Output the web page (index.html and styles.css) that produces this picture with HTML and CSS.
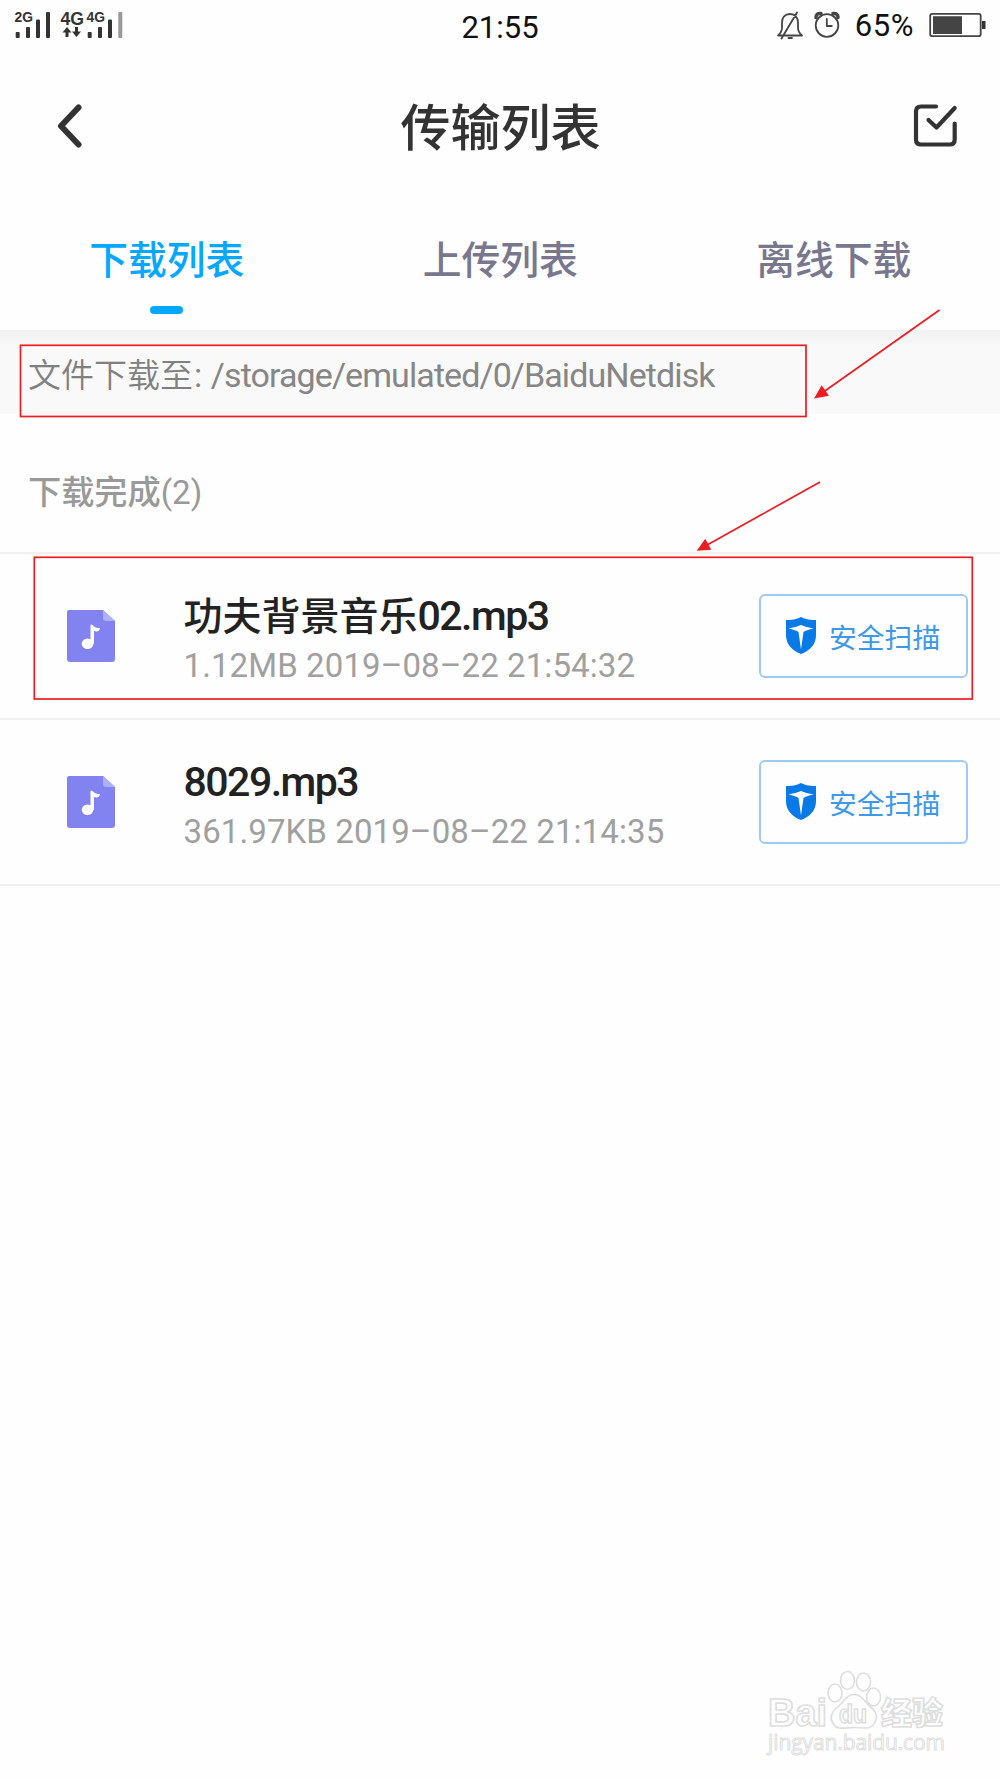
FILE: index.html
```html
<!DOCTYPE html>
<html lang="zh-CN">
<head>
<meta charset="utf-8">
<title>传输列表</title>
<link rel="stylesheet" href="styles.css">
</head>
<body>
<div class="screen">
  <div class="status">
    <svg class="signals" width="130" height="44" viewBox="0 0 130 44">
      <g class="net">
        <text x="14.5" y="22" font-size="14" textLength="18.500" lengthAdjust="spacingAndGlyphs">2G</text>
        <text x="60.5" y="24.5" font-size="18" textLength="23.500" lengthAdjust="spacingAndGlyphs">4G</text>
        <text x="86.5" y="22" font-size="14" textLength="18.500" lengthAdjust="spacingAndGlyphs">4G</text>
      </g>
      <g fill="#333">
        <rect x="15.700" y="32" width="4" height="6" rx="1"/><rect x="26" y="27" width="4" height="11" rx="1"/><rect x="36" y="19.500" width="4" height="18.500" rx="1"/><rect x="46" y="12" width="4" height="26" rx="1"/>
        <rect x="87.700" y="32" width="4" height="6" rx="1"/><rect x="98" y="27" width="4" height="11" rx="1"/><rect x="108" y="19.500" width="4" height="18.500" rx="1"/><rect x="118.300" y="12" width="4" height="26" rx="1" fill="#999"/>
        <path d="M67 27l4.500 5.500H68.500V37h-3v-4.500H62.500zM76.500 37l-4.500-5.500h3V27h3v4.500h3z"/>
      </g>
    </svg>
    <span class="clock">21:55</span>
    <div class="status-right">
      <svg width="64" height="32" viewBox="776 9 64 32" fill="none" stroke="#444" stroke-width="1.800" stroke-linecap="round" stroke-linejoin="round">
        <path d="M778 35.500h24c-3-2.500-4-4-4-8v-5c0-5-3-8.500-8-8.500s-8 3.500-8 8.500v5c0 4-1 5.500-4 8zM797 12.500l-15.500 26M788.500 38h3.500"/>
        <circle cx="827" cy="25.500" r="11.300"/><path d="M826.800 19v7h5"/>
        <path d="M816 17.500c0-3 2-4.500 5-4M833 13.500c3-.5 5 1 5 4" stroke-width="3.500"/>
      </svg>
      <span class="percent">65%</span>
      <svg width="57" height="26" viewBox="929 12 57 26"><rect x="930.200" y="13.800" width="50.500" height="22.400" rx="2" fill="none" stroke="#444" stroke-width="1.800"/><path d="M933 16.200h29V34h-29z" fill="#444"/><path d="M982 21h3.500v8H982z" fill="#333"/></svg>
    </div>
  </div>
  <div class="header">
    <svg width="30" height="50" viewBox="0 0 30 50"><path d="M22.500 6.500L5 25l17.500 18.500" fill="none" stroke="#333" stroke-width="6" stroke-linecap="round" stroke-linejoin="round"/></svg>
    <h1>传输列表</h1>
    <svg width="46" height="46" viewBox="913 102 46 46" fill="none" stroke="#333" stroke-width="4.200" stroke-linecap="round" stroke-linejoin="round"><path d="M936 105.500h-15q-5 0-5 5v28q0 5 5 5h28.700q5 0 5-5v-16M928.500 119l8 7.500 18.200-19.500"/></svg>
  </div>
  <div class="tabs">
    <div class="tab active">下载列表</div>
    <div class="tab">上传列表</div>
    <div class="tab">离线下载</div>
  </div>
  <div class="path">文件下载至<span class="path-latin">: /storage/emulated/0/BaiduNetdisk</span></div>
  <div class="section">下载完成<span class="count">(2)</span></div>
  <div class="row">
    <svg class="file" width="48" height="52" viewBox="0 0 48 52"><path d="M2 0h34l12 11v38q0 3-3 3H3q-3 0-3-3V2q0-2 2-2z" fill="#8283f0"/><path d="M36 0l12 11h-9q-3 0-3-3z" fill="#adafff"/><ellipse cx="20.500" cy="33.800" rx="5.800" ry="5.200" fill="#fff"/><path d="M23.500 34V15.500q0-1.500 2-.5c2 2.500 4.500 3 7.500 3-.5 3.500-3 4-6 3V34z" fill="#fff"/></svg>
    <div class="info"><div class="name">功夫背景音乐<span class="name-latin">02.mp3</span></div><div class="meta">1.12MB 2019–08–22 21:54:32</div></div>
    <div class="scan"><svg width="30" height="37" viewBox="0 0 30 37"><path d="M0 3Q9 3.500 15 0q6 3.500 15 3V18q0 13-15 19Q0 31 0 18z" fill="#087ae8"/><path d="M2.500 11.500Q10 10 15 8q5 2 12.500 3.500Q20 13 17.500 15L15 32.500 12.500 15Q10 13 2.500 11.500z" fill="#fff"/></svg><span>安全扫描</span></div>
  </div>
  <div class="row">
    <svg class="file" width="48" height="52" viewBox="0 0 48 52"><path d="M2 0h34l12 11v38q0 3-3 3H3q-3 0-3-3V2q0-2 2-2z" fill="#8283f0"/><path d="M36 0l12 11h-9q-3 0-3-3z" fill="#adafff"/><ellipse cx="20.500" cy="33.800" rx="5.800" ry="5.200" fill="#fff"/><path d="M23.500 34V15.500q0-1.500 2-.5c2 2.500 4.500 3 7.500 3-.5 3.500-3 4-6 3V34z" fill="#fff"/></svg>
    <div class="info"><div class="name"><span class="name-latin">8029.mp3</span></div><div class="meta">361.97KB 2019–08–22 21:14:35</div></div>
    <div class="scan"><svg width="30" height="37" viewBox="0 0 30 37"><path d="M0 3Q9 3.500 15 0q6 3.500 15 3V18q0 13-15 19Q0 31 0 18z" fill="#087ae8"/><path d="M2.500 11.500Q10 10 15 8q5 2 12.500 3.500Q20 13 17.500 15L15 32.500 12.500 15Q10 13 2.500 11.500z" fill="#fff"/></svg><span>安全扫描</span></div>
  </div>
  <div class="footer">
    <svg width="190" height="96" viewBox="760 1666 190 96" class="mark">
      <text x="768" y="1726" font-size="38" font-weight="700" textLength="59" lengthAdjust="spacingAndGlyphs">Bai</text>
      <ellipse cx="835" cy="1693" rx="7" ry="9"/><ellipse cx="847.500" cy="1680.500" rx="7" ry="9"/><ellipse cx="863.500" cy="1682" rx="7" ry="9"/><ellipse cx="873.500" cy="1697" rx="7" ry="9"/>
      <path d="M854 1694.500c8 0 10 7 16 12 6 4 8 10 5 16-4 8-12 5-21 5s-17 3-21-4c-4-6-1-12 5-17 6-4 8-12 16-12z"/>
      <text x="839" y="1722.500" font-size="25" font-weight="700" textLength="28" lengthAdjust="spacingAndGlyphs">du</text>
      <text class="han" x="881" y="1724" font-size="31" font-weight="900" textLength="62">经验</text>
      <text class="site" x="768" y="1750" font-size="21" textLength="177">jingyan.baidu.com</text>
    </svg>
  </div>
  <svg class="notes" width="1000" height="720" viewBox="0 0 1000 720">
    <g fill="none" stroke="#ed1c24" stroke-width="1.700"><rect x="20.500" y="345.300" width="785.500" height="71.200"/><rect x="34.300" y="557.300" width="938" height="141.700"/><path d="M939.500 310L822 393M820 482l-112 62.500"/></g>
    <path d="M814 398.500l7.700-13.200 7.300 10.400zM696.700 550.800l8.600-12 6 11z" fill="#ed1c24"/>
  </svg>
</div>
</body>
</html>
```
FILE: styles.css
```css
* { box-sizing: border-box; }
body { margin: 0; background: #fefefe; font-family: "Noto Sans CJK SC", sans-serif; }
.screen { position: relative; display: flex; flex-direction: column; width: 1000px; height: 1778px; overflow: hidden; }
svg { flex: none; display: block; }
.status { display: grid; grid-template-columns: 1fr auto 1fr; align-items: center; height: 52px; padding: 0 14px; font: 31px/52px Roboto, sans-serif; color: #111; }
.signals { align-self: start; margin-left: -14px; }
.net { font-family: "Liberation Sans", sans-serif; font-weight: 700; fill: #333; }
.clock { padding-top: 2px; }
.status-right { display: flex; align-items: center; justify-content: flex-end; gap: 15px; height: 50px; align-self: start; }
.percent { padding-top: 2px; letter-spacing: .6px; }
.header { display: flex; align-items: center; justify-content: space-between; height: 148px; padding: 0 41px 0 56px; }
h1 { margin: 0; padding: 0 0 5px 2px; font-size: 50px; font-weight: 500; line-height: 60px; color: #333; }
.tabs { display: grid; grid-template-columns: repeat(3, 333.5px); height: 130px; padding-top: 27px; }
.tab { display: flex; flex-direction: column; align-items: center; gap: 18.5px; font-size: 38.8px; font-weight: 500; line-height: 60px; color: #78778e; }
.active { color: #06a7ff; }
.active::after { content: ""; width: 33px; height: 8px; border-radius: 4px; background: #06a7ff; }
.path { height: 84px; padding: 13px 0 0 28px; background: linear-gradient(#f1f1f1, #f9f9f9 15px); font-size: 33px; font-weight: 350; line-height: 60px; color: #808080; white-space: nowrap; }
.path-latin { padding-left: 1px; font-family: Roboto, sans-serif; font-size: 34px; font-weight: 400; letter-spacing: -.9px; word-spacing: 2px; color: #868686; }
.section { height: 140px; padding: 46px 0 0 28px; border-bottom: 2px solid #f0f0f0; font-size: 33.2px; font-weight: 500; line-height: 60px; color: #999; }
.count { font-family: Roboto, sans-serif; font-weight: 400; }
.row { display: flex; align-items: center; height: 165.8px; padding: 0 32px 0 67px; border-bottom: 2px solid #f0f0f0; }
.info { flex: 1; padding-left: 68.5px; white-space: nowrap; }
.name { height: 56px; font-size: 39px; font-weight: 500; line-height: 56px; color: #222; }
.name-latin { font-family: Roboto, sans-serif; font-size: 41px; letter-spacing: -1.5px; }
.meta { height: 46px; font: 400 33px/50px Roboto, sans-serif; letter-spacing: .1px; color: #a0a0a0; }
.scan { display: flex; align-items: center; gap: 13px; width: 209px; height: 84px; padding-left: 25px; border: 2px solid #a0caf6; border-radius: 6px; font-size: 27.8px; line-height: 40px; color: #3d98e8; }
.footer { display: flex; justify-content: flex-end; margin-top: auto; padding: 0 50px 16px 0; }
.mark { fill: #fefefe; stroke: #dedede; stroke-width: 1.6px; font-family: "Liberation Sans", sans-serif; }
.han { font-family: "Noto Sans CJK SC", sans-serif; }
.site { font-family: "Open Sans", sans-serif; stroke-width: 1px; }
.notes { position: absolute; left: 0; top: 0; }
```
